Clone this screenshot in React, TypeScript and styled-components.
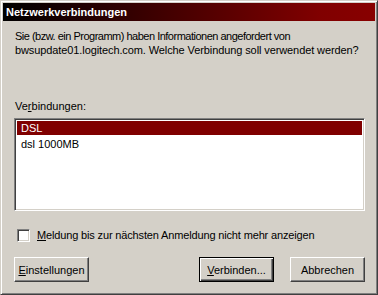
import React from "react"
import styled, { createGlobalStyle } from "styled-components"

const GlobalStyle = createGlobalStyle`
  html, body {
    margin: 0;
    padding: 0;
    background: #d4d0c8;
  }
  body {
    font-family: "Liberation Sans", Arial, sans-serif;
    font-size: 11px;
    color: #000;
  }
`

const Window = styled.div`
  width: 378px;
  height: 295px;
  box-sizing: border-box;
  background: #d4d0c8;
  border-top: 1px solid #d4d0c8;
  border-left: 1px solid #d4d0c8;
  border-right: 1px solid #404040;
  border-bottom: 1px solid #404040;
  box-shadow: inset 1px 1px 0 #ffffff, inset -1px -1px 0 #808080;
  padding: 2px;
  display: flex;
  flex-direction: column;
  overflow: hidden;
`

const TitleBar = styled.div`
  height: 18px;
  flex-shrink: 0;
  background: linear-gradient(to right, #000000, #800000 85%, #880000);
  color: #ffffff;
  font-weight: bold;
  font-size: 11px;
  line-height: 18px;
  padding-left: 3px;
`

const Body = styled.div`
  flex: 1;
  padding: 8px 0 0 12px;
  display: flex;
  flex-direction: column;
`

const Message = styled.div`
  line-height: 14px;
  white-space: nowrap;
`

const MessageLine = styled.div<{ $spacing: number }>`
  letter-spacing: ${(p) => p.$spacing}px;
`

const Label = styled.div`
  margin-top: 43px;
  line-height: 13px;
`

const Key = styled.span`
  text-decoration: underline;
  text-underline-offset: 1px;
`

const ListBox = styled.div`
  margin: 5px 0 0 -1px;
  width: 351px;
  height: 93px;
  flex-shrink: 0;
  box-sizing: border-box;
  background: #ffffff;
  border-top: 1px solid #808080;
  border-left: 1px solid #808080;
  border-right: 1px solid #ffffff;
  border-bottom: 1px solid #ffffff;
  box-shadow: inset 1px 1px 0 #404040, inset -1px -1px 0 #d4d0c8;
  padding: 2px;
`

const Item = styled.div<{ $selected?: boolean }>`
  height: 14px;
  line-height: 14px;
  padding-left: 4px;
  margin-bottom: 2px;
  background: ${(p) => (p.$selected ? "#800000" : "transparent")};
  color: ${(p) => (p.$selected ? "#ffffff" : "#000000")};
`

const CheckRow = styled.label`
  margin-top: 18px;
  margin-left: 2px;
  display: flex;
  align-items: center;
  gap: 7px;
  line-height: 13px;
  letter-spacing: -0.15px;
`

const CheckBox = styled.span`
  width: 13px;
  height: 13px;
  flex-shrink: 0;
  box-sizing: border-box;
  background: #ffffff;
  border-top: 1px solid #808080;
  border-left: 1px solid #808080;
  border-right: 1px solid #ffffff;
  border-bottom: 1px solid #ffffff;
  box-shadow: inset 1px 1px 0 #404040, inset -1px -1px 0 #d4d0c8;
`

const ButtonRow = styled.div`
  margin-top: 15px;
  margin-left: -1px;
  display: flex;
  width: 351px;
`

const Spacer = styled.div`
  flex: 1;
`

const Button = styled.button<{ $default?: boolean; $gap?: number }>`
  width: 75px;
  height: 25px;
  box-sizing: border-box;
  margin: 0 0 0 ${(p) => p.$gap || 0}px;
  padding: 0;
  font-family: "Liberation Sans", Arial, sans-serif;
  font-size: 11px;
  color: #000;
  background: #d4d0c8;
  border-top: 1px solid ${(p) => (p.$default ? "#000" : "#fff")};
  border-left: 1px solid ${(p) => (p.$default ? "#000" : "#fff")};
  border-right: 1px solid ${(p) => (p.$default ? "#000" : "#404040")};
  border-bottom: 1px solid ${(p) => (p.$default ? "#000" : "#404040")};
  box-shadow: ${(p) =>
    p.$default
      ? "inset 1px 1px 0 #ffffff, inset -1px -1px 0 #404040, inset -2px -2px 0 #808080"
      : "inset -1px -1px 0 #808080"};
`

export default function App() {
  return (
    <>
      <GlobalStyle />
      <Window>
        <TitleBar>Netzwerkverbindungen</TitleBar>
        <Body>
          <Message>
            <MessageLine $spacing={-0.5}>
              Sie (bzw. ein Programm) haben Informationen angefordert von
            </MessageLine>
            <MessageLine $spacing={-0.1}>
              bwsupdate01.logitech.com. Welche Verbindung soll verwendet werden?
            </MessageLine>
          </Message>
          <Label>
            Ve<Key>r</Key>bindungen:
          </Label>
          <ListBox>
            <Item $selected>DSL</Item>
            <Item>dsl 1000MB</Item>
          </ListBox>
          <CheckRow>
            <CheckBox />
            <span>
              <Key>M</Key>eldung bis zur nächsten Anmeldung nicht mehr anzeigen
            </span>
          </CheckRow>
          <ButtonRow>
            <Button>
              <Key>E</Key>instellungen
            </Button>
            <Spacer />
            <Button $default>
              <Key>V</Key>erbinden...
            </Button>
            <Button $gap={16}>Abbrechen</Button>
          </ButtonRow>
        </Body>
      </Window>
    </>
  )
}
